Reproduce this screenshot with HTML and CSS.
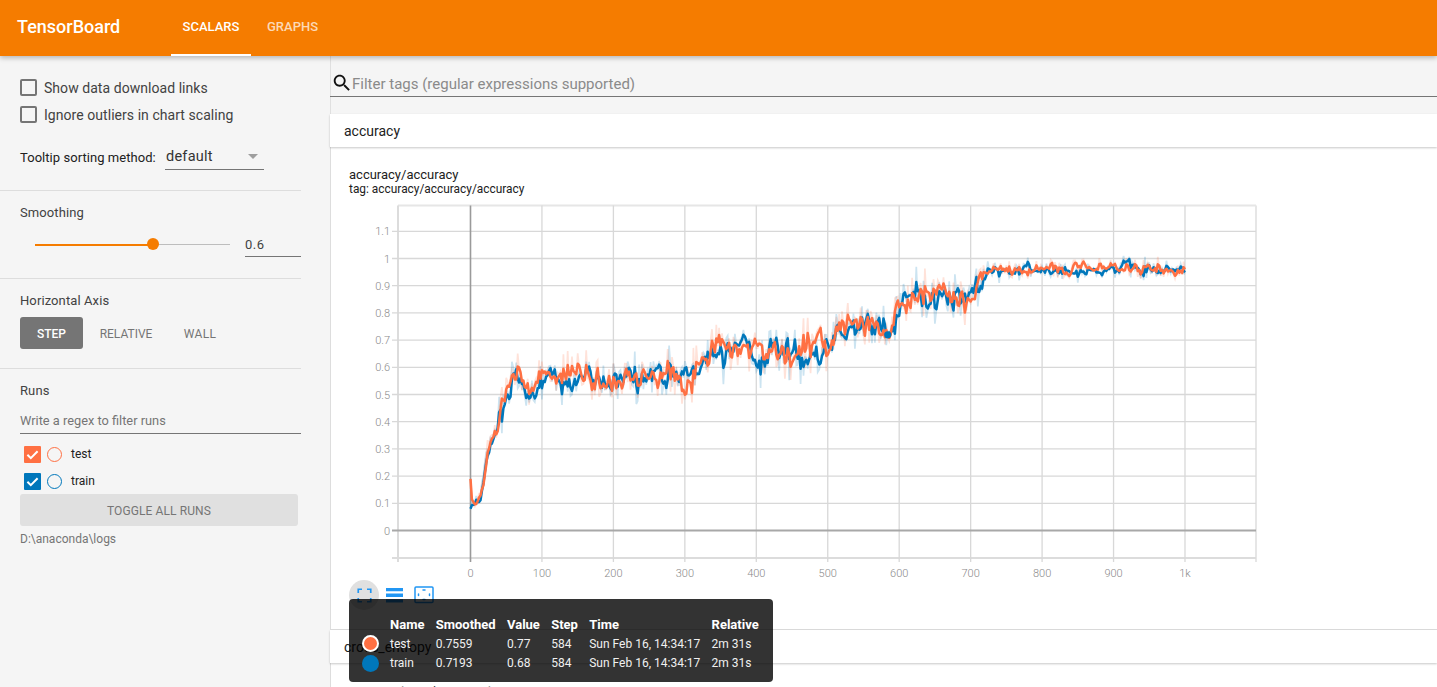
FILE: index.html
```html
<!DOCTYPE html>
<html lang="en">
<head>
<meta charset="utf-8">
<title>TensorBoard</title>
<link rel="stylesheet" href="styles.css">
</head>
<body>
<header class="topbar">
  <div class="brand">TensorBoard</div>
  <nav class="tabs">
    <a class="tab tab-active">SCALARS</a>
    <a class="tab">GRAPHS</a>
  </nav>
</header>
<div class="page">
  <aside class="sidebar">
    <section class="side-sec sec-options">
      <label class="check-row"><span class="box"></span>Show data download links</label>
      <label class="check-row"><span class="box"></span>Ignore outliers in chart scaling</label>
      <div class="sort-row">
        <span class="sort-label">Tooltip sorting method:</span>
        <div class="select"><span>default</span><i class="caret"></i></div>
      </div>
    </section>
    <section class="side-sec sec-smooth">
      <div class="sec-title">Smoothing</div>
      <div class="slider-row">
        <div class="slider"><div class="slider-fill"></div><div class="slider-knob"></div></div>
        <div class="slider-val">0.6</div>
      </div>
    </section>
    <section class="side-sec sec-axis">
      <div class="sec-title">Horizontal Axis</div>
      <div class="axis-btns">
        <span class="axis-btn axis-on">STEP</span>
        <span class="axis-btn axis-rel">RELATIVE</span>
        <span class="axis-btn axis-wall">WALL</span>
      </div>
    </section>
    <section class="sec-runs">
      <div class="sec-title">Runs</div>
      <div class="run-filter">Write a regex to filter runs</div>
      <div class="run-list">
        <div class="run-row">
          <span class="run-box run-test"><svg viewBox="0 0 17 17"><path d="M3.4 8.8l3.4 3.4 6.8-7" /></svg></span>
          <span class="run-dot dot-test"></span><span class="run-name">test</span>
        </div>
        <div class="run-row">
          <span class="run-box run-train"><svg viewBox="0 0 17 17"><path d="M3.4 8.8l3.4 3.4 6.8-7" /></svg></span>
          <span class="run-dot dot-train"></span><span class="run-name">train</span>
        </div>
      </div>
      <div class="toggle-btn">TOGGLE ALL RUNS</div>
      <div class="logdir">D:\anaconda\logs</div>
    </section>
  </aside>
  <main class="main">
    <div class="search">
      <svg class="search-icon" viewBox="0 0 24 24"><path d="M15.5 14h-.79l-.28-.27C15.41 12.59 16 11.11 16 9.5 16 5.91 13.09 3 9.5 3S3 5.91 3 9.5 5.91 16 9.5 16c1.61 0 3.09-.59 4.23-1.57l.27.28v.79l5 4.99L20.49 19l-4.99-5zm-6 0C7.01 14 5 11.99 5 9.5S7.01 5 9.5 5 14 7.01 14 9.5 11.99 14 9.5 14z"/></svg>
      <span>Filter tags (regular expressions supported)</span>
    </div>
    <div class="cat-head">accuracy</div>
    <div class="cat-body">
      <div class="chart-title">accuracy/accuracy</div>
      <div class="chart-tag">tag: accuracy/accuracy/accuracy</div>
      <svg id="chart" class="chart" width="920" height="380" viewBox="0 0 920 380"></svg>
      <div class="tools">
        <span class="tool tool-on">
          <svg viewBox="0 0 18 18"><path d="M1.500 6V1.500H6M12 1.500h4.500V6M16.500 12v4.500H12M6 16.500H1.500V12"/></svg>
        </span>
        <span class="tool">
          <svg viewBox="0 0 18 18" class="tool-fill"><path d="M0 1h18v3.500H0zM0 7h18v3.500H0zM0 13h18v3.500H0z"/></svg>
        </span>
        <span class="tool">
          <svg viewBox="0 0 20 18"><rect x="1" y="1" width="18" height="15.500" rx="1"/><path d="M9 4h2M9 13.500h2M4.500 8v1.500M15.500 8v1.500" class="tool-dash"/></svg>
        </span>
      </div>
    </div>
    <div class="cat-head">cross_entropy</div>
    <div class="cat-body cat-next">
      <div class="chart-title">cross_entropy/cross_entropy</div>
    </div>
  </main>
</div>
<div class="tooltip">
  <table class="tip-table">
    <thead>
      <tr><th class="c-dot"></th><th>Name</th><th>Smoothed</th><th>Value</th><th>Step</th><th>Time</th><th>Relative</th></tr>
    </thead>
    <tbody>
      <tr><td class="c-dot"><span class="tip-dot tip-test"></span></td><td>test</td><td>0.7559</td><td>0.77</td><td>584</td><td>Sun Feb 16, 14:34:17</td><td>2m 31s</td></tr>
      <tr><td class="c-dot"><span class="tip-dot tip-train"></span></td><td>train</td><td>0.7193</td><td>0.68</td><td>584</td><td>Sun Feb 16, 14:34:17</td><td>2m 31s</td></tr>
    </tbody>
  </table>
</div>
<script src="chart.js"></script>
</body>
</html>
```
FILE: styles.css
```css
* { box-sizing: border-box; }
html, body { margin: 0; height: 100%; overflow: hidden; }
body { font-family: Roboto, "Liberation Sans", sans-serif; background: #f5f5f5; color: #212121; position: relative; }

.topbar { height: 56px; background: #f57c00; color: #fff; display: flex; align-items: stretch; box-shadow: 0 2px 5px rgba(0,0,0,.26); position: relative; z-index: 2; padding-left: 17px; }
.brand { font-size: 18px; font-weight: 500; line-height: 53px; width: 154px; }
.tabs { display: flex; }
.tab { font-size: 13px; font-weight: 500; line-height: 53px; color: rgba(255,255,255,.72); padding: 0 12px; height: 56px; }
.tab-active { color: #fff; border-bottom: 2px solid #fff; padding: 0; width: 80px; text-align: center; margin-right: 4px; }

.page { display: flex; height: 631px; overflow: hidden; }
.sidebar { width: 331px; flex: none; border-right: 1px solid #e0e0e0; font-size: 14px; }
.side-sec { width: 301px; border-bottom: 1px solid #ddd; padding-left: 20px; }
.sec-options { height: 134.500px; padding-top: 18px; }
.sec-smooth { height: 88px; padding-top: 14px; }
.sec-axis { height: 90px; padding-top: 14px; }
.sec-runs { width: 301px; padding: 14px 0 0 20px; }

.check-row { display: flex; align-items: center; height: 27px; color: #424242; letter-spacing: .05px; }
.box { width: 17px; height: 17px; border: 2px solid #757575; border-radius: 2px; margin-right: 7px; flex: none; }
.sort-row { display: flex; align-items: center; margin-top: 16px; height: 26px; font-size: 13px; color: #212121; letter-spacing: .05px; }
.sort-label { width: 145px; flex: none; }
.select { width: 99px; height: 26px; border-bottom: 1px solid #757575; display: flex; justify-content: space-between; align-items: center; font-size: 14.500px; letter-spacing: .25px; padding: 0 6px 0 1px; color: #333; }
.caret { width: 0; height: 0; border-left: 5.500px solid transparent; border-right: 5.500px solid transparent; border-top: 5.500px solid #9e9e9e; }

.sec-title { font-size: 13px; color: #424242; line-height: 16px; letter-spacing: .1px; }
.slider-row { display: flex; align-items: center; margin-top: 12px; }
.slider { width: 195px; height: 1px; margin-left: 15px; background: #bdbdbd; position: relative; }
.slider-fill { width: 117px; height: 2px; margin-top: -.5px; background: #f57c00; }
.slider-knob { position: absolute; left: 112px; top: -6px; width: 12px; height: 12px; border-radius: 50%; background: #f57c00; }
.slider-val { width: 56px; margin-left: 15px; height: 24px; font-size: 13px; line-height: 24px; color: #424242; border-bottom: 1px solid #757575; letter-spacing: .5px; flex: none; }

.axis-btns { display: flex; margin-top: 8px; }
.axis-btn { font-size: 12px; height: 32px; line-height: 34px; color: #757575; text-align: center; flex: none; }
.axis-on { width: 63px; background: #757575; color: #fff; border-radius: 3px; font-weight: 500; }
.axis-rel { width: 86px; }
.axis-wall { width: 62px; letter-spacing: .3px; }

.run-filter { margin-top: 12px; height: 23px; font-size: 12.800px; line-height: 19px; color: #757575; border-bottom: 1px solid #757575; width: 281px; }
.run-list { margin-top: 7px; }
.run-row { display: flex; align-items: center; height: 27px; margin-left: 4px; }
.run-box { width: 17px; height: 17px; border-radius: 1px; flex: none; display: block; margin-top: 1px; }
.run-box svg { display: block; width: 17px; height: 17px; }
.run-box path { fill: none; stroke: #fff; stroke-width: 2; }
.run-test { background: #ff7043; }
.run-train { background: #0077bb; }
.run-dot { width: 15px; height: 15px; border-radius: 50%; margin-left: 6px; border: 1.500px solid; flex: none; margin-top: 1px; }
.dot-test { border-color: #ff7043; }
.dot-train { border-color: #0077bb; }
.run-name { font-size: 12px; margin-left: 9px; color: #212121; }
.toggle-btn { width: 278px; height: 32px; line-height: 34px; background: #e0e0e0; border-radius: 3px; color: #757575; font-size: 12px; letter-spacing: .1px; text-align: center; margin-top: -.5px; }
.logdir { font-size: 12px; color: #757575; margin-top: 6px; line-height: 15px; }

.main { flex: 1; min-width: 0; display: flex; flex-direction: column; }
.search { height: 41px; flex: none; margin: 0 0 17px -1px; display: flex; align-items: center; border-bottom: 1px solid #757575; font-size: 15px; color: #8a8a8a; padding: 16px 0 0 1px; }
.search-icon { width: 22px; height: 22px; fill: #111; flex: none; margin: -2px -1px 0 0; }
.cat-head { height: 33px; flex: none; line-height: 34px; padding-left: 14px; background: #fff; font-size: 14px; color: #212121; box-shadow: 0 1px 2px rgba(0,0,0,.22); position: relative; margin-left: -1px; }
.cat-body { height: 483px; flex: none; background: #fff; border-left: 1px solid #ddd; padding: 20px 0 0 18px; margin-left: -1px; border-bottom: 1px solid #ddd; }
.chart-title { font-size: 13px; line-height: 15px; color: #212121; }
.chart-tag { font-size: 11.900px; line-height: 13px; color: #212121; margin-top: 1px; }
.chart { display: block; overflow: visible; margin-top: 1px; }
.tools { display: flex; position: relative; margin-top: 3px; }
.tool { width: 30px; height: 30px; display: flex; align-items: center; justify-content: center; }
.tool-on { background: #e0e0e0; border-radius: 50%; }
.tool svg { width: 15px; height: 15px; fill: none; stroke: #2196f3; stroke-width: 2; }
.tool svg.tool-fill { width: 17px; height: 17px; fill: #2196f3; stroke: none; }
.tool:last-child svg { width: 20px; height: 18px; stroke-width: 1.500; }
.tool-dash { stroke-linecap: round; }

.tooltip { position: absolute; left: 349px; top: 599px; width: 424px; height: 83px; background: rgba(0,0,0,.8); border-radius: 4px; color: #fff; font-size: 12px; z-index: 3; padding: 15px 0 0 13px; }
.tip-table { border-collapse: collapse; }
.tip-table th { font-size: 13px; font-weight: 700; text-align: left; padding: 0 11.300px 0 0; height: 20px; white-space: nowrap; }
.tip-table td { padding: 0 11.300px 0 0; height: 19.500px; white-space: nowrap; color: #f0f0f0; }
.tip-table .c-dot { padding: 0; width: 28px; }
.tip-dot { display: block; width: 17px; height: 17px; border-radius: 50%; }
.tip-test { background: #ff7043; border: 2px solid #fff; }
.tip-train { background: #0077bb; }
```
FILE: chart.js
```js
// Builds the scalar chart: grid, axis labels and two seeded noisy runs with exponential smoothing.
(function () {
  var svg = document.getElementById('chart');
  var NS = 'http://www.w3.org/2000/svg';
  // chart origin in svg coordinates (page x 349, page y 197)
  var ox = 470.5 - 349, oy = 530.5 - 197;
  var sx = 0.7145, sy = 272;
  var L = 398 - 349, R = 1256 - 349, T = 205.5 - 197, B = 558 - 197;
  function X(s) { return ox + s * sx; }
  function Y(v) { return oy - v * sy; }
  function add(tag, attrs, text) {
    var e = document.createElementNS(NS, tag);
    for (var k in attrs) e.setAttribute(k, attrs[k]);
    if (text !== undefined) e.textContent = text;
    svg.appendChild(e);
    return e;
  }
  function line(x1, y1, x2, y2, c, w) {
    add('line', { x1: x1, y1: y1, x2: x2, y2: y2, stroke: c, 'stroke-width': w || 1 });
  }
  var label = { 'font-size': 11, 'font-weight': 300, fill: '#8a8a8a', 'font-family': 'Roboto' };
  function text(x, y, anchor, s) {
    add('text', Object.assign({ x: x, y: y, 'text-anchor': anchor }, label), s);
  }
  var i;
  // frame
  line(L, T, R, T, '#e6e6e6', 2);
  line(L, T, L, B + 4, '#dcdcdc', 2);
  line(R, T, R, B + 4, '#e6e6e6', 2);
  line(L - 6, B, R, B, '#dcdcdc', 2);
  // grid
  for (i = 1; i <= 11; i++) {
    var y = Y(i / 10);
    line(L - 6, y, R, y, '#d8d8d8', 1.3);
    text(L - 8, y + 4, 'end', i === 10 ? '1' : (i / 10).toFixed(1));
  }
  text(L - 8, Y(0) + 4, 'end', '0');
  for (i = 1; i <= 10; i++) {
    line(X(i * 100), T, X(i * 100), B + 4, '#d8d8d8', 1.3);
  }
  for (i = 0; i <= 10; i++) {
    text(X(i * 100), B + 18.5, 'middle', i === 10 ? '1k' : String(i * 100));
  }
  line(L - 6, Y(0), R, Y(0), '#a8a8a8', 2);
  line(X(0), T, X(0), B + 4, '#9a9a9a', 1.6);

  // target curve
  var K = [[0,.12],[6,.10],[11,.09],[16,.13],[20,.21],[27,.31],[39,.37],[44,.44],[50,.50],[56,.55],[80,.53],[110,.545],[150,.555],[190,.54],[230,.56],[270,.56],[300,.565],[318,.59],[332,.625],[345,.68],[365,.665],[400,.66],[450,.66],[490,.665],[505,.70],[518,.775],[545,.76],[570,.745],[585,.725],[595,.75],[604,.87],[640,.865],[680,.865],[700,.85],[715,.92],[728,.955],[800,.96],[870,.96],[910,.965],[960,.96],[1000,.955]];
  function base(s) {
    for (var j = 1; j < K.length; j++) {
      if (s <= K[j][0]) {
        var t = (s - K[j - 1][0]) / (K[j][0] - K[j - 1][0]);
        return K[j - 1][1] + t * (K[j][1] - K[j - 1][1]);
      }
    }
    return K[K.length - 1][1];
  }
  function rng(seed) {
    return function () {
      seed = (seed * 1664525 + 1013904223) % 4294967296;
      return seed / 4294967296;
    };
  }
  function series(seed, off, phase) {
    var r = rng(seed), raw = [], sm = [], last = null, s;
    for (s = 0; s <= 1000; s += 2) {
      var amp = s < 40 ? 0.025 : s < 720 ? 0.066 : 0.026;
      var drift = (s < 40 ? 0 : s < 720 ? 0.006 : 0.002) * Math.sin(s / 11 + phase);
      var n = (r() + r() + r() - 1.5) * amp * 1.35;
      if (r() > 0.88) n += (r() - 0.55) * amp * 2.6;
      var v = base(s + 2) + off + drift + n;
      raw.push([s, v]);
      last = last === null ? v : last * 0.5 + v * 0.5;
      sm.push([s, last]);
    }
    return { raw: raw, sm: sm };
  }
  function d(pts) {
    return pts.map(function (p, j) { return (j ? 'L' : 'M') + X(p[0]).toFixed(1) + ' ' + Y(p[1]).toFixed(1); }).join('');
  }
  function draw(sr, c) {
    add('path', { d: d(sr.raw), fill: 'none', stroke: c, 'stroke-width': 1.7, opacity: 0.2 });
  }
  var train = series(12345, -0.002, 0), test = series(98765, 0.003, 2);
  test.raw[0][1] = .19; test.sm[0][1] = .19;
  draw(train, '#0077bb');
  draw(test, '#ff7043');
  add('path', { d: d(train.sm), fill: 'none', stroke: '#0077bb', 'stroke-width': 2.5, 'stroke-linejoin': 'round' });
  add('path', { d: d(test.sm), fill: 'none', stroke: '#ff7043', 'stroke-width': 2.5, 'stroke-linejoin': 'round' });
  add('circle', { cx: X(584), cy: Y(.7193), r: 3.6, fill: '#0077bb' });
})();
```
